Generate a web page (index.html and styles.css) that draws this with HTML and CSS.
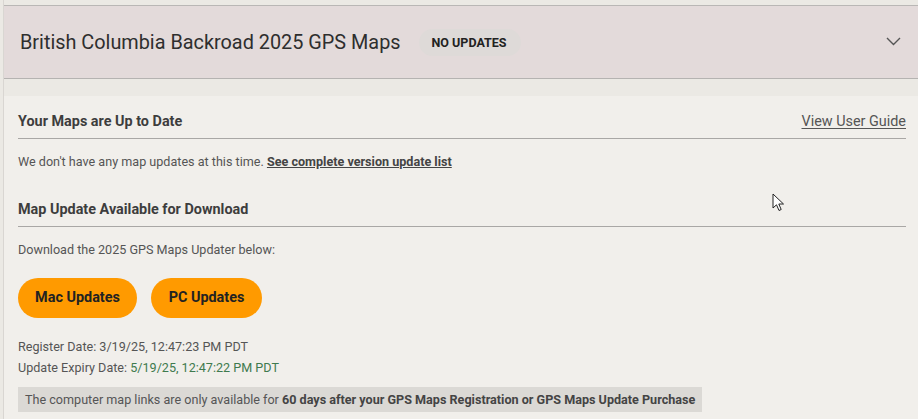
FILE: index.html
```html
<!DOCTYPE html>
<html>
<head>
<meta charset="utf-8">
<link rel="stylesheet" href="styles.css">
</head>
<body>
<div class="wrap">
  <div class="topstrip"></div>
  <header class="hdr">
    <div class="hdr-left">
      <h1 class="title">British Columbia Backroad 2025 GPS Maps</h1>
      <span class="badge">NO UPDATES</span>
    </div>
    <svg class="chev" width="15" height="9" viewBox="0 0 15 9"><path d="M1 1 L7.5 7.5 L14 1" fill="none" stroke="#555" stroke-width="1.4"/></svg>
  </header>
  <div class="gap"></div>
  <section class="panel">
    <div class="sec-head">
      <h2>Your Maps are Up to Date</h2>
      <a class="guide" href="#">View User Guide</a>
    </div>
    <p class="txt">We don't have any map updates at this time. <a class="lnk" href="#">See complete version update list</a></p>
    <div class="sec-head second">
      <h2>Map Update Available for Download</h2>
    </div>
    <p class="txt">Download the 2025 GPS Maps Updater below:</p>
    <div class="btns">
      <a class="btn mac" href="#">Mac Updates</a>
      <a class="btn pc" href="#">PC Updates</a>
    </div>
    <div class="dates">
      <p class="dl">Register Date: 3/19/25, 12:47:23 PM PDT</p>
      <p class="dl">Update Expiry Date: <span class="green">5/19/25, 12:47:22 PM PDT</span></p>
    </div>
    <div class="note">The computer map links are only available for <b>60 days after your GPS Maps Registration or GPS Maps Update Purchase</b></div>
    <svg class="cursor" width="13" height="19" viewBox="0 0 13 19"><path d="M1 1 L1 15 L4.5 11.8 L7 17.5 L9.2 16.5 L6.8 11 L11.5 11 Z" fill="#fff" stroke="#222" stroke-width="1" stroke-linejoin="round"/></svg>
  </section>
</div>
</body>
</html>
```
FILE: styles.css
```css
html, body {
  margin: 0;
  padding: 0;
  background: #ebe9e4;
  font-family: Roboto, "Liberation Sans", sans-serif;
  overflow: hidden;
}
.wrap {
  margin-left: 3px;
  width: 915px;
  height: 419px;
  border-left: 1px solid #d9d6d2;
  box-sizing: border-box;
  position: relative;
}
.topstrip {
  height: 5px;
  border-bottom: 1px solid #b9b7b5;
}
.hdr {
  height: 72px;
  background: #e3dada;
  border-bottom: 1px solid #b5b3b1;
  display: flex;
  align-items: center;
  justify-content: space-between;
  padding: 0 17px 0 16px;
}
.hdr-left {
  display: flex;
  align-items: center;
  gap: 18px;
}
.title {
  margin: 0;
  font-size: 19.85px;
  font-weight: 400;
  color: #2e2e2e;
}
.badge {
  background: #dedad8;
  border-radius: 14px;
  height: 27px;
  line-height: 27px;
  padding: 0 14px 0 13px;
  font-size: 12.5px;
  font-weight: 700;
  color: #222;
}
.chev {
  display: block;
  margin-top: -2px;
}
.gap {
  height: 17px;
}
.panel {
  background: #f1efeb;
  height: 330px;
  padding: 16px 12px 0 14px;
  box-sizing: border-box;
  position: relative;
}
.sec-head {
  display: flex;
  justify-content: space-between;
  align-items: baseline;
  border-bottom: 1px solid #a9a7a5;
  padding-bottom: 6px;
}
.sec-head.second {
  margin-top: 29px;
}
.sec-head h2 {
  margin: 0;
  font-size: 14.4px;
  line-height: 20px;
  font-weight: 700;
  color: #3d3d3d;
}
.guide {
  font-size: 14.4px;
  color: #555;
  text-decoration: underline;
  text-underline-offset: 2px;
}
.txt {
  margin: 14px 0 0;
  font-size: 12.6px;
  line-height: 18px;
  color: #555;
}
.lnk {
  color: #444;
  font-weight: 700;
  text-decoration: underline;
}
.btns {
  display: flex;
  gap: 14px;
  margin-top: 19px;
}
.btn {
  display: block;
  height: 40px;
  line-height: 40px;
  border-radius: 20px;
  background: #ff9a00;
  color: #222;
  font-size: 14.4px;
  font-weight: 700;
  text-decoration: none;
  text-align: center;
}
.btn.mac { width: 119px; }
.btn.pc { width: 111px; }
.dates {
  margin-top: 18px;
}
.dl {
  margin: 0;
  font-size: 12.6px;
  line-height: 21px;
  color: #555;
}
.green {
  color: #3f7a4e;
}
.note {
  margin-top: 9px;
  display: inline-block;
  vertical-align: top;
  background: #dbd9d5;
  padding: 4px 7px;
  font-size: 12.6px;
  line-height: 17px;
  color: #555;
}
.note b {
  color: #444;
}
.cursor {
  position: absolute;
  left: 768px;
  top: 97px;
}
```
